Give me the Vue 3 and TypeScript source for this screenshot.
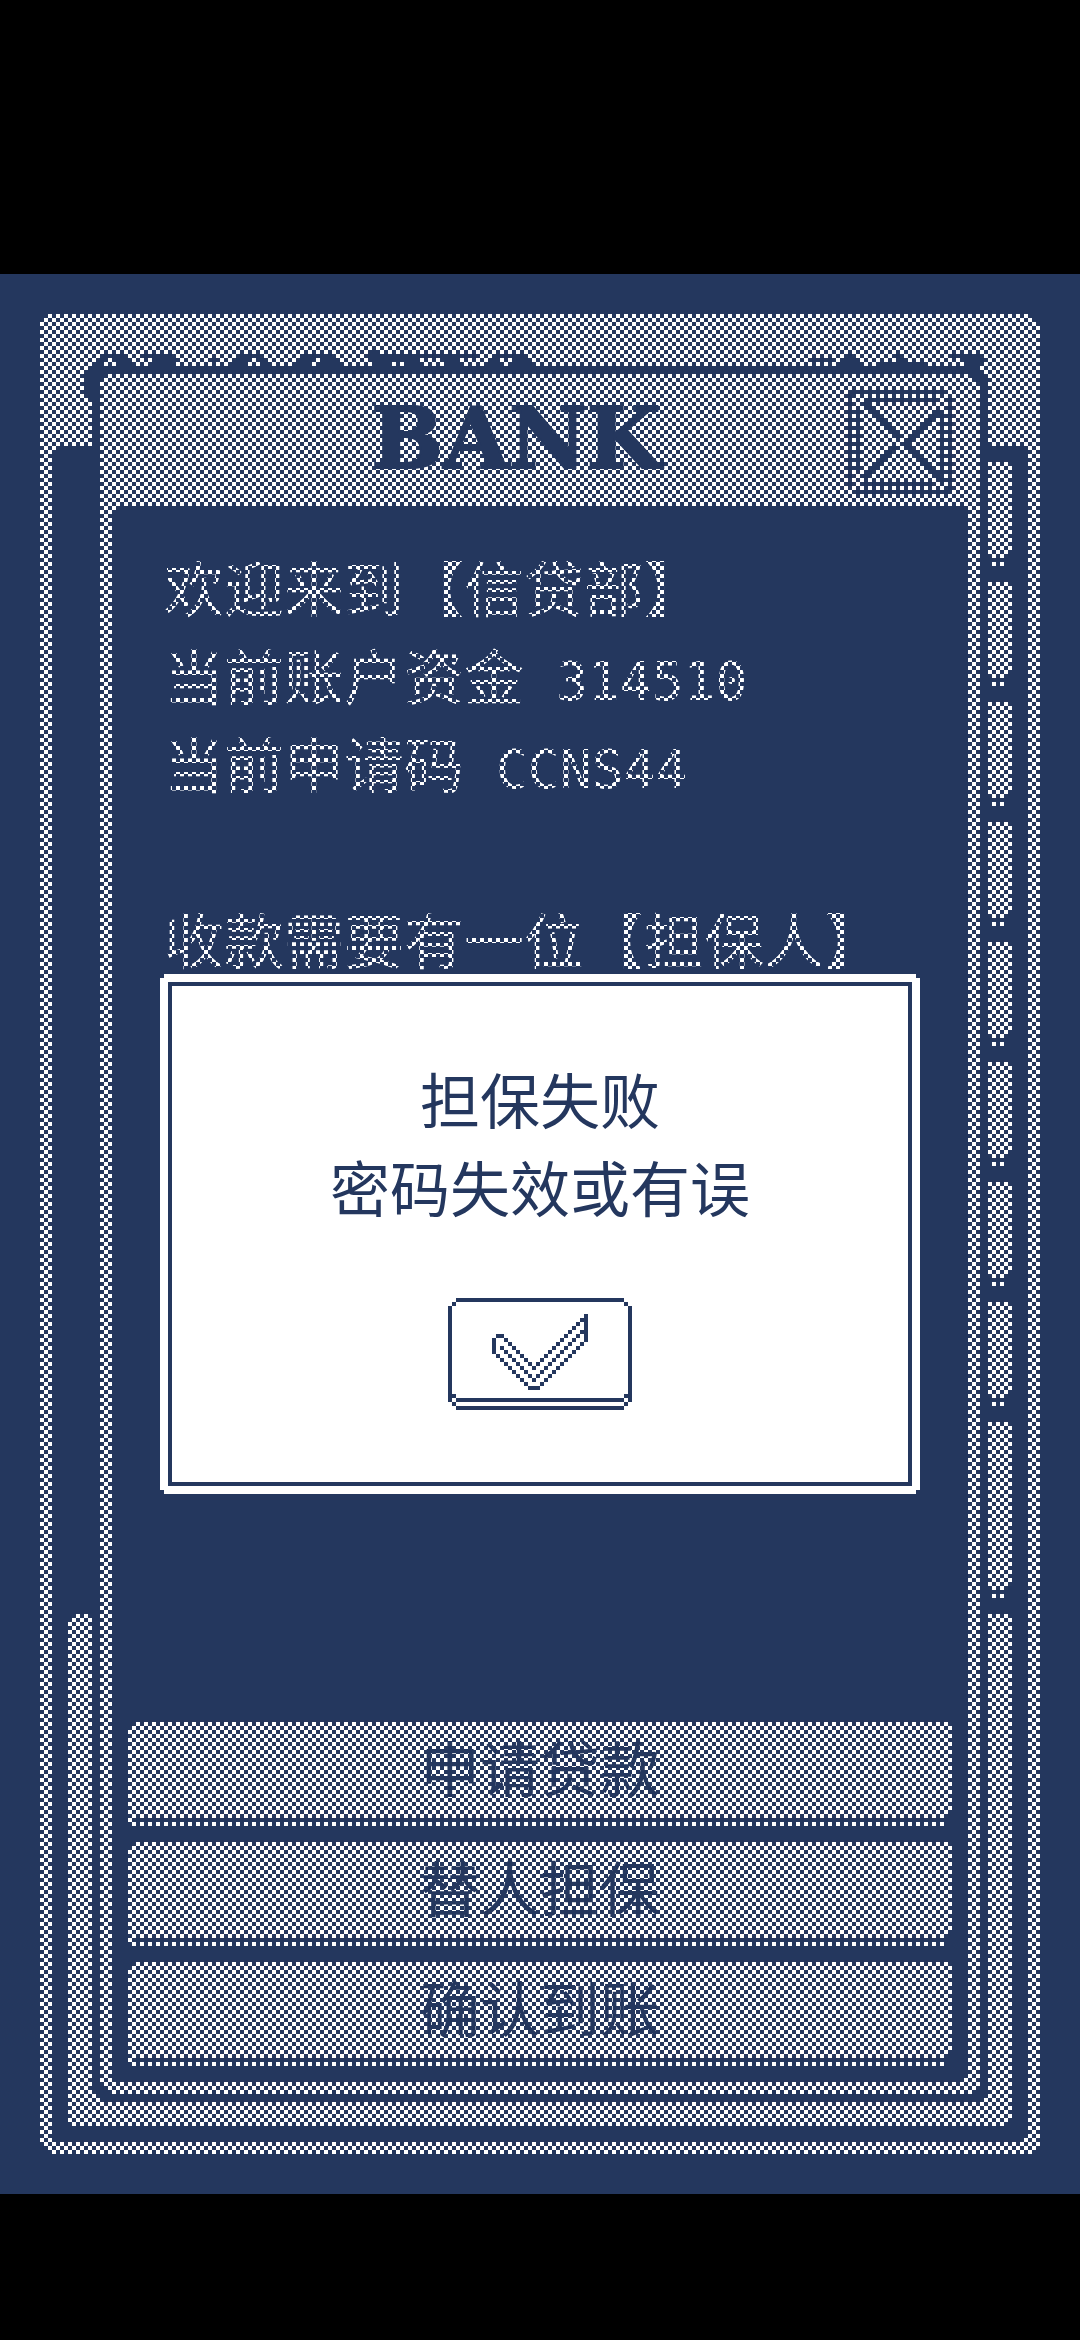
<script setup lang="ts">
import { ref } from 'vue'

type Cell = [number, number]

interface AccountLine {
  label: string
  code?: string
}

const accountLines: AccountLine[] = [
  { label: '欢迎来到【信贷部】' },
  { label: '当前账户资金', code: '314510' },
  { label: '当前申请码', code: 'CCNS44' },
  { label: '' },
  { label: '收款需要有一位【担保人】' },
]
const actions = ['申请贷款', '替人担保', '确认到账']
const notice = ['担保失败', '密码失效或有误']
const slots = [false, false, false, false, false, false, false, false, true]

const noticeOpen = ref(true)

// Walks diagonally from one cell to another, both ends included.
function diagonal(from: Cell, to: Cell): Cell[] {
  const steps = Math.abs(to[0] - from[0])
  const dx = Math.sign(to[0] - from[0])
  const dy = Math.sign(to[1] - from[1])
  return Array.from({ length: steps + 1 }, (_, i): Cell => [from[0] + dx * i, from[1] + dy * i])
}

function toPath(cells: Cell[]): string {
  return cells.map(([x, y]) => `M${x} ${y}h1v1h-1z`).join('')
}

const tickPath =
  'M23 0h1v7h-1zM1 5h2v1h-2zM0 6h1v4h-1zM9 18h3v1h-3z' +
  toPath([
    ...diagonal([22, 1], [10, 13]),
    ...diagonal([9, 12], [3, 6]),
    ...diagonal([1, 10], [8, 17]),
    ...diagonal([12, 17], [22, 7]),
    ...diagonal([2, 8], [10, 16]),
    ...diagonal([11, 15], [22, 4]),
  ])

const crossPath = toPath([
  ...diagonal([4, 3], [12, 11]),
  ...diagonal([13, 13], [21, 21]),
  ...diagonal([5, 3], [12, 10]),
  ...diagonal([14, 13], [22, 21]),
  ...diagonal([22, 5], [15, 12]),
  ...diagonal([11, 14], [4, 21]),
  ...diagonal([22, 4], [14, 12]),
  ...diagonal([11, 13], [3, 21]),
])
</script>

<template>
  <div class="page">
    <main class="screen">
      <section class="window" aria-hidden="true">
        <header class="window-head">
          <svg class="ornament" width="456" height="52" viewBox="0 0 114 13" shape-rendering="crispEdges">
            <path
              d="M4 1h7v1h1v1h1v1H8v-1H7v-1H5v2h6v9H1v-1H0V5h1V4h1V3h1V2h1z
                 M14 1h8v1h1v2h-6v-2h-3z M31 2h3v1h-3z
                 M38 1h7v1h1v1h1v1h-3v-1h-1v-1h-1v1h-1v1h-5v-1h1v-1h1z
                 M55 1h8v1h1v1h1v1h-6v-2h-2v2h-5v-1h1v-1h2z
                 M71 0h2v1h26v1h-5v2h-4v-2h-6v2h-4v-1h-4v1h-4v-2h-1v-1z
                 M102 1h8v1h1v1h1v1h-5v-2h-3v2h-3v-2h1z"
            />
          </svg>
          <svg class="ornament" width="172" height="16" viewBox="0 0 43 4" shape-rendering="crispEdges">
            <path d="M0 2h6v1H0z M9 1h2v1h1v1h1v1H7v-1h1v-1h1z M21 1h2v2h6v1H16v-1h5z M35 1h8v2h-1v1h-3v-1h-1v-1h-3z" />
          </svg>
        </header>
        <div class="window-body">
          <div v-for="(tall, i) in slots" :key="i" class="slot face" :class="{ tall }"></div>
          <div class="tray"></div>
        </div>
      </section>

      <div class="bank-rim">
        <section class="bank" aria-labelledby="bank-title">
          <header class="bank-head">
            <h1 id="bank-title" class="bank-title">BANK</h1>
            <button class="close" type="button" aria-label="关闭">
              <svg viewBox="0 0 26 26" shape-rendering="crispEdges">
                <path
                  d="M1 .5h24M1 25.5h24M.5 1v24M25.5 1v24M4 2.5h19M3 23.5h19M2.5 4v17M23.5 6v18"
                  fill="none"
                  stroke="currentColor"
                />
                <path :d="crossPath" fill="currentColor" />
              </svg>
            </button>
          </header>
          <div class="bank-body">
            <div class="account">
              <p v-for="(line, i) in accountLines" :key="i">
                {{ line.label }}<span v-if="line.code" class="code">&nbsp;{{ line.code }}</span>
              </p>
            </div>
            <div class="actions">
              <button v-for="label in actions" :key="label" class="action face" type="button">{{ label }}</button>
            </div>
          </div>
        </section>
      </div>

      <div class="veil" aria-hidden="true"></div>

      <div v-if="noticeOpen" class="notice" role="alertdialog" aria-label="担保失败">
        <div class="notice-frame">
          <p v-for="line in notice" :key="line">{{ line }}</p>
          <button class="confirm" type="button" aria-label="确定" @click="noticeOpen = false">
            <span class="confirm-face face">
              <svg width="96" height="76" viewBox="0 0 24 19" shape-rendering="crispEdges">
                <path :d="tickPath" fill="currentColor" />
              </svg>
            </span>
          </button>
        </div>
      </div>
    </main>
  </div>
</template>

<style>
body {
  margin: 0;
  background: #000;
}
</style>

<style scoped>
.page {
  --navy: #24375e;
  --paper: #fff;
  --cut-one: polygon(
    4px 0, calc(100% - 4px) 0, calc(100% - 4px) 4px, 100% 4px,
    100% calc(100% - 4px), calc(100% - 4px) calc(100% - 4px), calc(100% - 4px) 100%, 4px 100%,
    4px calc(100% - 4px), 0 calc(100% - 4px), 0 4px, 4px 4px
  );
  --cut-two: polygon(
    8px 0, calc(100% - 8px) 0, calc(100% - 8px) 4px, calc(100% - 4px) 4px, calc(100% - 4px) 8px, 100% 8px,
    100% calc(100% - 8px), calc(100% - 4px) calc(100% - 8px), calc(100% - 4px) calc(100% - 4px),
    calc(100% - 8px) calc(100% - 4px), calc(100% - 8px) 100%, 8px 100%,
    8px calc(100% - 4px), 4px calc(100% - 4px), 4px calc(100% - 8px), 0 calc(100% - 8px),
    0 8px, 4px 8px, 4px 4px, 8px 4px
  );
  box-sizing: border-box;
  display: flex;
  flex-direction: column;
  min-height: 100vh;
  padding: 274px 0 146px;
  background: #000;
  color: var(--navy);
  font-family: "Noto Sans CJK SC", sans-serif;
}

.screen {
  flex: 1;
  display: grid;
  grid-template-columns: minmax(0, 1fr);
  background: var(--navy);
}

.screen > * {
  grid-area: 1 / 1;
}

button {
  box-sizing: border-box;
  border: 0;
  padding: 0;
  background: none;
  color: inherit;
  font: inherit;
  cursor: pointer;
}

p,
h1 {
  margin: 0;
}

.face {
  background:
    linear-gradient(var(--navy), var(--navy)) center bottom 4px / calc(100% - 8px) 4px no-repeat,
    linear-gradient(var(--navy), var(--navy)) left bottom 8px / 4px 4px no-repeat,
    linear-gradient(var(--navy), var(--navy)) right bottom 8px / 4px 4px no-repeat,
    var(--paper);
  clip-path: var(--cut-one);
}

/* Rear window */
.window {
  display: flex;
  flex-direction: column;
  margin: 40px;
  padding: 0 12px 12px;
  background: var(--paper);
  clip-path: var(--cut-two);
}

.window-head {
  box-sizing: border-box;
  display: flex;
  justify-content: space-between;
  align-items: flex-start;
  height: 132px;
  padding: 36px 44px 0 32px;
}

.ornament {
  fill: var(--navy);
}

.window-body {
  flex: 1;
  display: flex;
  flex-direction: column;
  align-items: flex-end;
  gap: 16px;
  padding: 16px;
  background: var(--navy);
  clip-path: var(--cut-one);
}

.slot {
  width: 120px;
  height: 104px;
}

.slot.tall {
  height: 176px;
}

.tray {
  flex: 1;
  align-self: stretch;
  background: var(--paper);
  clip-path: var(--cut-one);
}

/* Front window */
.bank-rim {
  display: flex;
  margin: 92px;
  padding: 8px;
  background: var(--navy);
  clip-path: var(--cut-two);
}

.bank {
  flex: 1;
  display: flex;
  flex-direction: column;
  padding: 0 12px 12px;
  background: var(--paper);
  clip-path: var(--cut-two);
}

.bank-head {
  display: flex;
  align-items: flex-start;
  padding: 16px 16px 12px 72px;
}

.bank-title {
  flex: 1;
  font: bold 85px / 96px "DejaVu Serif", serif;
  text-align: center;
  -webkit-text-stroke: 2px var(--navy);
}

.close {
  width: 104px;
  height: 104px;
}

.close svg {
  display: block;
  width: 100%;
  height: 100%;
}

.bank-body {
  flex: 1;
  display: flex;
  flex-direction: column;
  justify-content: space-between;
  padding: 36px 16px 16px;
  background: var(--navy);
  clip-path: var(--cut-one);
}

.account {
  padding: 0 36px;
  color: var(--paper);
  font-size: 60px;
  line-height: 88px;
}

.account p {
  height: 88px;
}

.code {
  font-family: "DejaVu Sans Mono", monospace;
  font-size: 53px;
}

.actions {
  display: flex;
  flex-direction: column;
  gap: 16px;
}

.action {
  height: 104px;
  padding-bottom: 16px;
  font-size: 60px;
  line-height: 88px;
}

/* Checkerboard shade over everything behind the notice */
.veil {
  z-index: 1;
  background: conic-gradient(var(--navy) 25%, transparent 0 50%, var(--navy) 0 75%, transparent 0) 0 0 / 8px 8px;
  pointer-events: none;
}

/* Notice */
.notice {
  z-index: 2;
  place-self: center;
  box-sizing: border-box;
  width: calc(100% - 320px);
  padding: 8px;
  background: var(--paper);
  clip-path: var(--cut-one);
}

.notice-frame {
  display: flex;
  flex-direction: column;
  align-items: center;
  padding: 68px 0 72px;
  border: 4px solid var(--navy);
  font-size: 60px;
  line-height: 88px;
}

.confirm {
  width: 184px;
  height: 112px;
  margin-top: 68px;
  padding: 4px;
  background: var(--navy);
  clip-path: var(--cut-two);
}

.confirm-face {
  box-sizing: border-box;
  display: flex;
  justify-content: center;
  height: 100%;
  padding-top: 12px;
}
</style>
